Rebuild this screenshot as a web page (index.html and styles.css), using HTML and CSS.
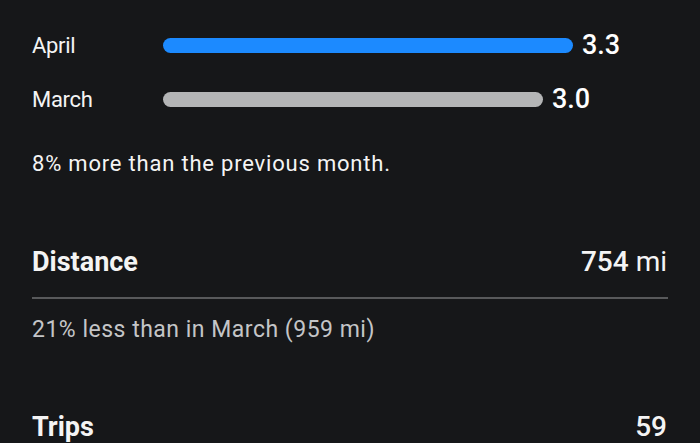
FILE: index.html
```html
<!DOCTYPE html>
<html>
<head>
<meta charset="utf-8">
<link rel="stylesheet" href="styles.css">
</head>
<body>
<div class="page">
  <div class="bars">
    <div class="bar-row">
      <div class="bar-label">April</div>
      <div class="bar-track">
        <div class="bar bar-blue" style="width:410px"></div>
        <div class="bar-value">3.3</div>
      </div>
    </div>
    <div class="bar-row">
      <div class="bar-label">March</div>
      <div class="bar-track">
        <div class="bar bar-gray" style="width:380px"></div>
        <div class="bar-value">3.0</div>
      </div>
    </div>
  </div>
  <p class="note">8% more than the previous month.</p>

  <section class="stat">
    <div class="stat-head">
      <div class="stat-title">Distance</div>
      <div class="stat-value"><span class="num">754</span> <span class="unit">mi</span></div>
    </div>
    <p class="stat-sub">21% less than in March (959 mi)</p>
  </section>

  <section class="stat">
    <div class="stat-head">
      <div class="stat-title">Trips</div>
      <div class="stat-value"><span class="num">59</span></div>
    </div>
  </section>
</div>
</body>
</html>
```

FILE: styles.css
```css
html, body {
  margin: 0;
  padding: 0;
  background: #161719;
}
body {
  font-family: Roboto, "Liberation Sans", sans-serif;
  color: #f4f4f4;
  width: 700px;
  height: 443px;
  overflow: hidden;
}
.page {
  padding: 31px 32px 0 32px;
}
.bars {
  display: flex;
  flex-direction: column;
  gap: 26px;
}
.bar-row {
  display: flex;
  align-items: center;
  height: 28px;
}
.bar-label {
  width: 131px;
  font-size: 22px;
  letter-spacing: -0.3px;
}
.bar-track {
  display: flex;
  align-items: center;
  gap: 9px;
}
.bar {
  height: 15px;
  border-radius: 8px;
}
.bar-blue { background: #1c8aff; }
.bar-gray { background: #b4b5b6; }
.bar-value {
  font-size: 27px;
  font-weight: 500;
  color: #ffffff;
}
.note {
  margin: 37px 0 0 0;
  font-size: 22px;
  letter-spacing: 0.8px;
  line-height: 28px;
}
.stat {
  margin-top: 68px;
}
.stat + .stat {
  margin-top: 67px;
}
.stat-head {
  display: flex;
  justify-content: space-between;
  align-items: baseline;
  padding: 0 1px 19px 0;
  border-bottom: 2px solid #58595b;
}
.stat-title {
  font-size: 27px;
  font-weight: 700;
  line-height: 32px;
}
.stat-value {
  font-size: 28px;
  line-height: 32px;
}
.stat-value .num { font-weight: 500; }
.stat-value .unit { font-weight: 400; }
.stat-sub {
  margin: 17px 0 0 0;
  font-size: 23px;
  letter-spacing: 0.5px;
  line-height: 28px;
  color: #c4c5c7;
}
```
